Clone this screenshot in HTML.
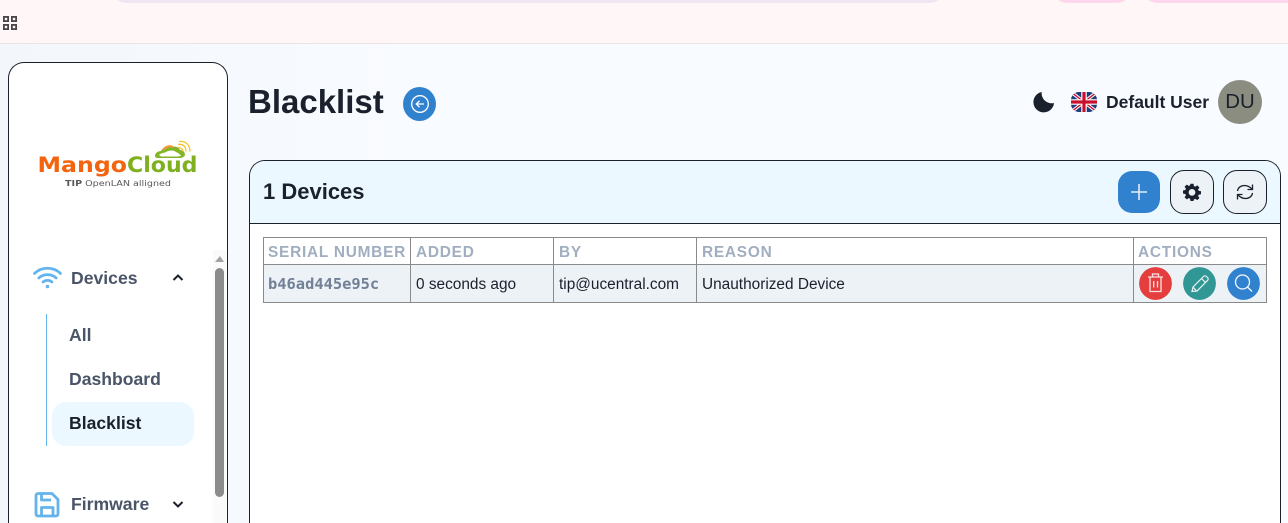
<!DOCTYPE html>
<html>
<head>
<meta charset="utf-8">
<style>
html,body{margin:0;padding:0;width:1288px;height:523px;overflow:hidden;background:#f7fafe;font-family:"Liberation Sans",sans-serif;color:#1a202c}
#p{position:relative;width:1288px;height:523px;overflow:hidden;background:linear-gradient(90deg,#f3f7fb 0,#f8fbff 420px)}
.a{position:absolute}
.t{position:absolute;white-space:nowrap}
.cell{position:absolute;box-sizing:border-box;border:1px solid #8a8a8a}
.th{color:#a0aec0;font-weight:700;font-size:15.4px;letter-spacing:.77px;line-height:28px;height:28px;top:237px;padding-top:1px;padding-left:5px;background:#fff;white-space:nowrap;overflow:hidden}
.td{top:264px;height:39px;background:#edf2f7;font-size:15.4px;line-height:38px;padding-top:1px;padding-left:5px;white-space:nowrap;overflow:hidden;color:#1a202c}
.nav{font-weight:700;font-size:17.6px;color:#4a5568;line-height:20px}
.btn{position:absolute;box-sizing:border-box;width:44px;height:44px;border-radius:14px;top:170px;display:block}
.rnd{position:absolute;width:33px;height:33px;border-radius:50%;top:267px}
.clip{position:absolute;left:0;top:0;width:1288px;height:3px;overflow:hidden}
.bar{position:absolute;top:-20px;height:23px;border-radius:0 0 14px 14px}
</style>
</head>
<body>
<div id="p">
<div class="a" style="left:0;top:0;width:1288px;height:43px;background:#fff7f7;border-bottom:1px solid #efe0e4"></div>
<div class="clip">
<div class="bar" style="left:112px;width:832px;background:#efe6f2"></div>
<div class="bar" style="left:1053px;width:78px;background:#fed7ec"></div>
<div class="bar" style="left:1143px;width:160px;background:#fed7ec"></div>
</div>
<svg class="a" style="left:3px;top:16px" width="14" height="14" viewBox="0 0 14 14"><g fill="none" stroke="#4a4548" stroke-width="1.800"><rect x=".9" y=".9" width="4.200" height="4.200"/><rect x="8.900" y=".9" width="4.200" height="4.200"/><rect x=".9" y="8.900" width="4.200" height="4.200"/><rect x="8.900" y="8.900" width="4.200" height="4.200"/></g></svg>

<div class="a" style="left:8px;top:62px;width:218px;height:460px;background:#fff;border:1px solid #1a202c;border-bottom:none;border-radius:16px 16px 0 0"></div>
<svg class="a" style="left:36px;top:138px" width="165" height="52" viewBox="0 0 165 52">
<text x="1.500" y="34" font-family="DejaVu Sans" font-weight="700" font-size="21.500" fill="#f4640f" textLength="89.500" lengthAdjust="spacingAndGlyphs">Mango</text>
<text x="91" y="34" font-family="DejaVu Sans" font-weight="700" font-size="21.500" fill="#7eb020" textLength="70.500" lengthAdjust="spacingAndGlyphs">Cloud</text>
<text x="29" y="48" font-family="DejaVu Sans" font-size="8.200" fill="#5a5a5a" textLength="106" lengthAdjust="spacingAndGlyphs"><tspan font-weight="700">TIP</tspan> OpenLAN alligned</text>
<path d="M119 18c0-3 3-5 6-5 2-4 7-6 11-4 3-1 7 0 8 3 3 0 5 2 5 5-1 2-3 3-5 3H122c-2 0-3-1-3-2z" fill="#84b528"/>
<path d="M123 17c2-2 5-2 7-3 3-2 8-2 10 0 2 1 4 2 5 4l-3 .500H125z" fill="#fff"/>
<path d="M127 12c2-3 6-5 10-3" fill="none" stroke="#f59a3e" stroke-width="2"/>
<path d="M142 6.500c5-1 8 2 8 7M143 3.500c7-1 11 4 11 10M142 9.500c3 0 5 2 5 4" fill="none" stroke="#f5c431" stroke-width="1.300"/>
</svg>

<svg class="a" style="left:33px;top:266px" width="29" height="24" viewBox="0 0 29 24" fill="none" stroke="#63b3ed" stroke-linecap="round" stroke-width="2.700"><path d="M1.500 7.500C8.500 .5 20.500 .5 27.500 7.500"/><path d="M5.800 12C10.500 7.500 18.500 7.500 23.200 12"/><path d="M10 16C12.500 13.800 16.500 13.800 19 16"/><circle cx="14.500" cy="20.500" r="1.800" fill="#63b3ed" stroke="none"/></svg>
<div class="t nav" style="left:71px;top:268px">Devices</div>
<svg class="a" style="left:172px;top:273px" width="12" height="9" viewBox="0 0 12 9"><path d="M1.500 7L6 2.500 10.500 7" fill="none" stroke="#1a202c" stroke-width="2"/></svg>
<div class="a" style="left:46px;top:314px;width:1px;height:132px;background:#63b3ed"></div>
<div class="t nav" style="left:69px;top:325px">All</div>
<div class="t nav" style="left:69px;top:369px">Dashboard</div>
<div class="a" style="left:52px;top:402px;width:142px;height:44px;background:#ebf8ff;border-radius:14px"></div>
<div class="t nav" style="left:69px;top:413px;color:#1a202c">Blacklist</div>
<svg class="a" style="left:34px;top:491px" width="26" height="27" viewBox="0 0 26 27" fill="none" stroke="#63b3ed" stroke-width="2.800" stroke-linejoin="round"><path d="M4 2.500H18l6 6V23a2 2 0 0 1-2 2H4a2 2 0 0 1-2-2V4.500a2 2 0 0 1 2-2z"/><path d="M7.500 2.500V9H17"/><path d="M7.500 25V16.500H19V25"/></svg>
<div class="t nav" style="left:71px;top:494px">Firmware</div>
<svg class="a" style="left:172px;top:500px" width="12" height="9" viewBox="0 0 12 9"><path d="M1.500 2L6 6.500 10.500 2" fill="none" stroke="#1a202c" stroke-width="2"/></svg>
<div class="a" style="left:213px;top:250px;width:13px;height:273px;background:#fafafa"></div>
<div class="a" style="left:215px;top:256px;width:0;height:0;border-left:5px solid transparent;border-right:4px solid transparent;border-bottom:6px solid #a3a3a3"></div>
<div class="a" style="left:215px;top:268px;width:9px;height:229px;background:#8c8c8c;border-radius:5px"></div>

<div class="t" style="left:248px;top:82px;font-size:33px;line-height:40px;font-weight:700;color:#1a202c">Blacklist</div>
<svg class="a" style="left:403px;top:87px" width="33" height="34" viewBox="0 0 33 34"><ellipse cx="16.500" cy="17" rx="16.500" ry="17" fill="#3182ce"/><circle cx="17" cy="17" r="8.300" fill="none" stroke="#fff" stroke-width="1.300"/><path d="M21 17h-7.500M16.500 13.800L13.300 17l3.200 3.200" fill="none" stroke="#fff" stroke-width="1.300"/></svg>

<svg class="a" style="left:1033px;top:91px" width="22" height="22" viewBox="0 0 22 22"><path d="M8.700 1A10.300 10.300 0 1 0 21 12A10 10 0 0 1 8.700 1z" fill="#1a202c"/></svg>
<svg class="a" style="left:1071px;top:92px" width="26" height="20" viewBox="0 0 26 20"><defs><clipPath id="f"><rect width="26" height="20" rx="8"/></clipPath></defs><g clip-path="url(#f)"><rect width="26" height="20" fill="#1f3d7a"/><path d="M0 0L26 20M26 0L0 20" stroke="#fff" stroke-width="3.400"/><path d="M0 0L26 20M26 0L0 20" stroke="#c8102e" stroke-width="1.300"/><path d="M13 0V20M0 10H26" stroke="#fff" stroke-width="5.500"/><path d="M13 0V20M0 10H26" stroke="#c8102e" stroke-width="3.200"/></g></svg>
<div class="t" style="left:1106px;top:92px;font-size:17.500px;line-height:21px;font-weight:700;color:#1a202c">Default User</div>
<div class="a" style="left:1218px;top:80px;width:44px;height:44px;border-radius:50%;background:#8a8d7f;color:#1a202c;font-size:20.400px;line-height:45px;text-align:center">DU</div>

<div class="a" style="left:249px;top:160px;width:1030px;height:362px;background:#fff;border:1px solid #1a202c;border-bottom:none;border-radius:16px 16px 0 0;overflow:hidden"><div style="height:62px;background:#ebf8ff;border-bottom:1px solid #1a202c"></div></div>
<div class="t" style="left:263px;top:179px;font-size:22px;line-height:26px;font-weight:700;color:#1a202c">1 Devices</div>
<div class="btn" style="left:1118px;top:171px;width:42px;height:42px;background:#3182ce"></div>
<svg class="a" style="left:1130px;top:183px" width="18" height="18" viewBox="0 0 18 18"><path d="M9 1V17M1 9H17" stroke="#e2ecf6" stroke-width="1.600"/></svg>
<div class="btn" style="left:1170px;border:1px solid #1a202c;background:#edf2f7"></div>
<svg class="a" style="left:1183px;top:183px" width="18" height="18" viewBox="0 0 24 24"><path fill="#1a202c" fill-rule="evenodd" d="M10 1h4l.6 3.100 1.800.8L19 3.100 21.900 6l-1.800 2.600.8 1.800L24 11v4l-3.100.6-.8 1.800 1.800 2.600-2.900 2.900-2.600-1.800-1.800.8L14 24h-4l-.6-3.100-1.800-.8L5 21.900 2.100 19l1.800-2.600-.8-1.800L0 14v-4l3.100-.6.8-1.800L2.100 5 5 2.100l2.600 1.800 1.800-.8zM12 8a4.500 4.500 0 1 0 0 9 4.500 4.500 0 0 0 0-9z"/></svg>
<div class="btn" style="left:1223px;border:1px solid #1a202c;background:#edf2f7"></div>
<svg class="a" style="left:1236px;top:183px" width="18" height="18" viewBox="0 0 18 18" fill="none" stroke="#1a202c" stroke-width="1.300"><path d="M1.500 8C2 4.500 5 2.500 8.500 2.500c3 0 5 1 7.500 3.500"/><path d="M16.500 1.500V6.500H11.500"/><path d="M16.500 10C16 13.500 13 15.500 9.500 15.500c-3 0-5-1-7.500-3.500"/><path d="M1.500 16.500V11.500H6.500"/></svg>

<div class="cell th" style="left:263px;width:148px;padding-left:4px">SERIAL NUMBER</div>
<div class="cell th" style="left:410px;width:144px">ADDED</div>
<div class="cell th" style="left:553px;width:144px">BY</div>
<div class="cell th" style="left:696px;width:438px">REASON</div>
<div class="cell th" style="left:1133px;width:134px;padding-left:4px">ACTIONS</div>
<div class="cell td" style="left:263px;width:148px;padding-top:0;padding-left:4px;font-family:'DejaVu Sans Mono','Liberation Mono',monospace;font-weight:700;font-size:15.400px;color:#718096">b46ad445e95c</div>
<div class="cell td" style="left:410px;width:144px">0 seconds ago</div>
<div class="cell td" style="left:553px;width:144px">tip@ucentral.com</div>
<div class="cell td" style="left:696px;width:438px">Unauthorized Device</div>
<div class="cell td" style="left:1133px;width:134px"></div>

<svg class="rnd" style="left:1139px" viewBox="0 0 33 33"><circle cx="16.500" cy="16.500" r="16.500" fill="#e53e3e"/><g fill="none" stroke="#fff" stroke-width="1.300" opacity=".85"><path d="M9 10H24M13.500 10V7H19.500V10M11 10V24.500H22V10M14.700 14V20.500M18.500 14V20.500"/></g></svg>
<svg class="rnd" style="left:1183px" viewBox="0 0 33 33"><circle cx="16.500" cy="16.500" r="16.500" fill="#319795"/><g fill="none" stroke="#fff" stroke-width="1.200" opacity=".9"><path d="M9 24.500L10 20 20.500 9.500a2 2 0 0 1 3 0l1 1a2 2 0 0 1 0 3L14 24l-5 .5zM18.500 11.500L22.500 15.500M10 20L13.500 24"/></g></svg>
<svg class="rnd" style="left:1227px" viewBox="0 0 33 33"><circle cx="16.500" cy="16.500" r="16.500" fill="#3182ce"/><g fill="none" stroke="#fff" stroke-width="1.300" opacity=".95"><circle cx="15.500" cy="15" r="7"/><path d="M20.500 20L25 24.500"/></g></svg>
</div>
</body>
</html>
